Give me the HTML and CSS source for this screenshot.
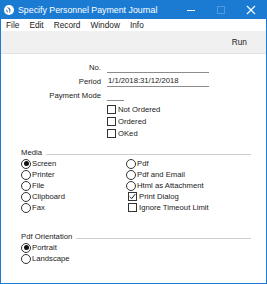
FILE: index.html
```html
<!DOCTYPE html>
<html lang="en">
<head>
    <meta charset="UTF-8">
    <title>Specify Personnel Payment Journal</title>
    <link rel="stylesheet" href="styles.css">
</head>
<body>
    <div class="window">
        <div class="titlebar">
            <svg class="app-icon" width="10" height="10" viewBox="0 0 10 10">
                <circle cx="5" cy="5" r="5" fill="#fff"/>
                <path d="M3 2.2 C6.5 2.6 7.6 6 5.2 8.2 C6.2 5.8 5.2 3.6 3 2.2 Z" fill="#1a4f8a"/>
                <path d="M2.2 4.4 C3.6 5 4 6.6 3.2 7.8 C2.6 6.6 2.4 5.6 2.2 4.4 Z" fill="#1a4f8a"/>
            </svg>
            <span class="title">Specify Personnel Payment Journal</span>
            <div class="win-buttons">
                <span class="wbtn">
                    <svg width="10" height="10" viewBox="0 0 10 10"><path d="M1 5.5 H9" stroke="#fff" stroke-width="1"/></svg>
                </span>
                <span class="wbtn">
                    <svg width="10" height="10" viewBox="0 0 10 10"><rect x="1.5" y="1.5" width="7" height="7" fill="none" stroke="#4d9ae0" stroke-width="1"/></svg>
                </span>
                <span class="wbtn">
                    <svg width="10" height="10" viewBox="0 0 10 10"><path d="M1 1 L9 9 M9 1 L1 9" stroke="#fff" stroke-width="1.1"/></svg>
                </span>
            </div>
        </div>

        <div class="menubar">
            <span>File</span>
            <span>Edit</span>
            <span>Record</span>
            <span>Window</span>
            <span>Info</span>
        </div>

        <div class="toolbar">
            <span class="run">Run</span>
        </div>

        <div class="content">
            <div class="form">
                <label>No.</label>
                <div class="field"></div>
                <label>Period</label>
                <div class="field">1/1/2018:31/12/2018</div>
                <label>Payment Mode</label>
                <div class="field short"></div>
            </div>

            <div class="checks">
                <div class="check"><span class="box"></span>Not Ordered</div>
                <div class="check"><span class="box"></span>Ordered</div>
                <div class="check"><span class="box"></span>OKed</div>
            </div>

            <div class="group">
                <div class="group-head"><span>Media</span><div class="rule"></div></div>
                <div class="cols">
                    <div class="col left">
                        <div class="radio"><span class="dot on"></span>Screen</div>
                        <div class="radio"><span class="dot"></span>Printer</div>
                        <div class="radio"><span class="dot"></span>File</div>
                        <div class="radio"><span class="dot"></span>Clipboard</div>
                        <div class="radio"><span class="dot"></span>Fax</div>
                    </div>
                    <div class="col">
                        <div class="radio"><span class="dot"></span>Pdf</div>
                        <div class="radio"><span class="dot"></span>Pdf and Email</div>
                        <div class="radio"><span class="dot"></span>Html as Attachment</div>
                        <div class="check inset"><span class="box ticked">
                            <svg width="7" height="7" viewBox="0 0 7 7"><path d="M0.8 3.6 L2.7 5.6 L6.3 1" fill="none" stroke="#222" stroke-width="1"/></svg>
                        </span>Print Dialog</div>
                        <div class="check inset"><span class="box"></span>Ignore Timeout Limit</div>
                    </div>
                </div>
            </div>

            <div class="group orient">
                <div class="group-head"><span>Pdf Orientation</span><div class="rule"></div></div>
                <div class="radio"><span class="dot on"></span>Portrait</div>
                <div class="radio"><span class="dot"></span>Landscape</div>
            </div>
        </div>
    </div>
</body>
</html>
```

FILE: styles.css
```css
* {
    margin: 0;
    padding: 0;
    box-sizing: border-box;
}

body {
    font-family: 'Liberation Sans', Arial, sans-serif;
    font-size: 7.7px;
    color: #1a1a1a;
    background: #fff;
}

.window {
    width: 267px;
    height: 284px;
    border: 1px solid #1b7bd3;
    border-top: none;
    display: flex;
    flex-direction: column;
    background: #fff;
}

/* title bar */
.titlebar {
    height: 19px;
    background: #1b7bd3;
    display: flex;
    align-items: center;
    padding-left: 3px;
    color: #fff;
}

.app-icon {
    flex: none;
    margin-right: 4px;
}

.title {
    font-size: 8.8px;
    flex: 1;
}

.win-buttons {
    display: flex;
    height: 100%;
}

.wbtn {
    width: 30px;
    display: flex;
    align-items: center;
    justify-content: center;
}

/* menu */
.menubar {
    height: 12px;
    display: flex;
    align-items: center;
    gap: 10px;
    padding-left: 5px;
    font-size: 8.3px;
}

.toolbar {
    height: 23px;
    background: #f0f0f0;
    border-bottom: 1px solid #e2e2e2;
    display: flex;
    align-items: center;
    justify-content: flex-end;
    padding-right: 19px;
    font-size: 8.3px;
}

/* form */
.content {
    flex: 1;
    padding-top: 7px;
}

.form {
    display: grid;
    grid-template-columns: 100px 102px;
    grid-auto-rows: 14px;
    column-gap: 6px;
}

.form label {
    text-align: right;
    line-height: 13px;
}

.field {
    margin-top: 1px;
    height: 11px;
    line-height: 10px;
    border-bottom: 1px solid #8c8c8c;
    padding-left: 1px;
}

.field.short {
    width: 17px;
}

.checks {
    margin-left: 106px;
}

.check {
    height: 12px;
    display: flex;
    align-items: center;
}

.box {
    width: 9px;
    height: 9px;
    border: 1px solid #333;
    margin-right: 2px;
    display: flex;
    align-items: center;
    justify-content: center;
    flex: none;
}

/* groups */
.group {
    margin: 7px 15px 0 20px;
}

.group-head {
    height: 12px;
    display: flex;
    align-items: center;
}

.rule {
    flex: 1;
    height: 1px;
    background: #cfcfcf;
    margin: 4px 0 0 4px;
}

.cols {
    display: flex;
}

.col.left {
    width: 105px;
}

.radio {
    height: 11px;
    display: flex;
    align-items: center;
}

.dot {
    width: 10px;
    height: 10px;
    border: 1px solid #333;
    border-radius: 50%;
    margin-right: 1px;
    display: flex;
    align-items: center;
    justify-content: center;
    flex: none;
}

.dot.on::after {
    content: "";
    width: 5px;
    height: 5px;
    border-radius: 50%;
    background: #111;
}

.check.inset {
    height: 11px;
    padding-left: 2px;
}

.group.orient {
    margin-top: 17px;
}
```
